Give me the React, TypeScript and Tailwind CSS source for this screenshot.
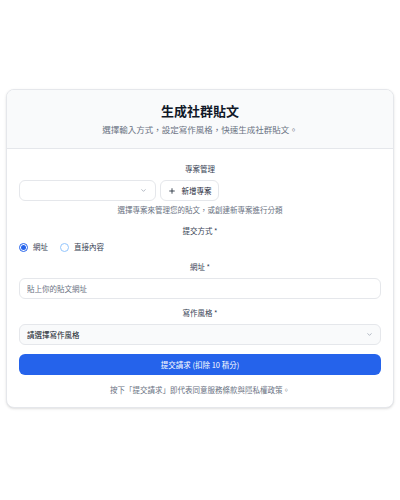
import React, { useState } from 'react';

const font = { fontFamily: '"Noto Sans CJK TC", "Noto Sans", sans-serif' };

const Chevron: React.FC = () => (
  <svg width="7" height="7" viewBox="0 0 24 24" fill="none" stroke="currentColor" strokeWidth="2.5" strokeLinecap="round" strokeLinejoin="round">
    <path d="m6 9 6 6 6-6" />
  </svg>
);

const Radio: React.FC<{ checked: boolean; label: string; onClick: () => void }> = ({ checked, label, onClick }) => (
  <button onClick={onClick} className="flex items-center gap-[5px]">
    <span
      className={`w-[9px] h-[9px] rounded-full border flex items-center justify-center ${
        checked ? 'border-[#2563eb]' : 'border-[#93c5fd]'
      }`}
    >
      {checked && <span className="w-[5px] h-[5px] rounded-full bg-[#2563eb]" />}
    </span>
    <span className="text-[7.5px] leading-[12px] text-gray-700">{label}</span>
  </button>
);

const App: React.FC = () => {
  const [mode, setMode] = useState<'url' | 'text'>('url');

  return (
    <div lang="zh-TW" style={font} className="min-h-[500px] px-[6px] pt-[89px] bg-white">
      <div className="w-full border border-gray-200 rounded-lg bg-white shadow-sm overflow-hidden">
        {/* header */}
        <div className="bg-gray-50 border-b border-gray-200 pt-[13px] pb-[13px] text-center">
          <h1 className="text-[13px] leading-[16px] font-bold text-gray-900">生成社群貼文</h1>
          <p className="mt-[4px] text-[8.5px] leading-[12px] text-gray-500">選擇輸入方式，設定寫作風格，快速生成社群貼文。</p>
        </div>

        {/* body */}
        <div className="px-[12px] pt-[14px] pb-[11px]">
          <div className="text-center text-[7.5px] leading-[12px] text-gray-700">專案管理</div>
          <div className="mt-[5px] flex gap-[4px]">
            <button className="w-[137px] h-[21px] border border-gray-200 rounded-md bg-white flex items-center justify-end pr-[8px] text-gray-400">
              <Chevron />
            </button>
            <button className="w-[59px] h-[21px] border border-gray-200 rounded-md bg-white flex items-center justify-center gap-[6px] text-gray-800">
              <svg width="8" height="8" viewBox="0 0 24 24" fill="none" stroke="currentColor" strokeWidth="2.5" strokeLinecap="round">
                <path d="M5 12h14M12 5v14" />
              </svg>
              <span className="text-[7.5px]">新增專案</span>
            </button>
          </div>
          <p className="mt-[3px] text-center text-[7.5px] leading-[12px] text-gray-500">選擇專案來管理您的貼文，或創建新專案進行分類</p>

          <div className="mt-[9px] text-center text-[7.5px] leading-[12px] text-gray-700">提交方式 *</div>
          <div className="mt-[4px] flex items-center gap-[12px]">
            <Radio checked={mode === 'url'} label="網址" onClick={() => setMode('url')} />
            <Radio checked={mode === 'text'} label="直接內容" onClick={() => setMode('text')} />
          </div>

          <div className="mt-[8px] text-center text-[7.5px] leading-[12px] text-gray-700">網址 *</div>
          <input
            placeholder="貼上你的貼文網址"
            className="mt-[5px] w-full h-[21px] border border-gray-200 rounded-md px-[7px] text-[7.5px] text-gray-800 placeholder:text-gray-500 outline-none"
          />

          <div className="mt-[8px] text-center text-[7.5px] leading-[12px] text-gray-700">寫作風格 *</div>
          <button className="mt-[5px] w-full h-[21px] border border-gray-200 rounded-md bg-gray-50 px-[7px] flex items-center justify-between text-gray-400">
            <span className="text-[7.5px] text-gray-900">請選擇寫作風格</span>
            <Chevron />
          </button>

          <button className="mt-[9px] w-full h-[21px] rounded-md bg-[#2563eb] text-white text-[7.5px] flex items-center justify-center">
            提交請求 (扣除 10 積分)
          </button>

          <p className="mt-[9px] text-center text-[7.5px] leading-[12px] text-gray-500">按下「提交請求」即代表同意服務條款與隱私權政策。</p>
        </div>
      </div>
    </div>
  );
};

export default App;
